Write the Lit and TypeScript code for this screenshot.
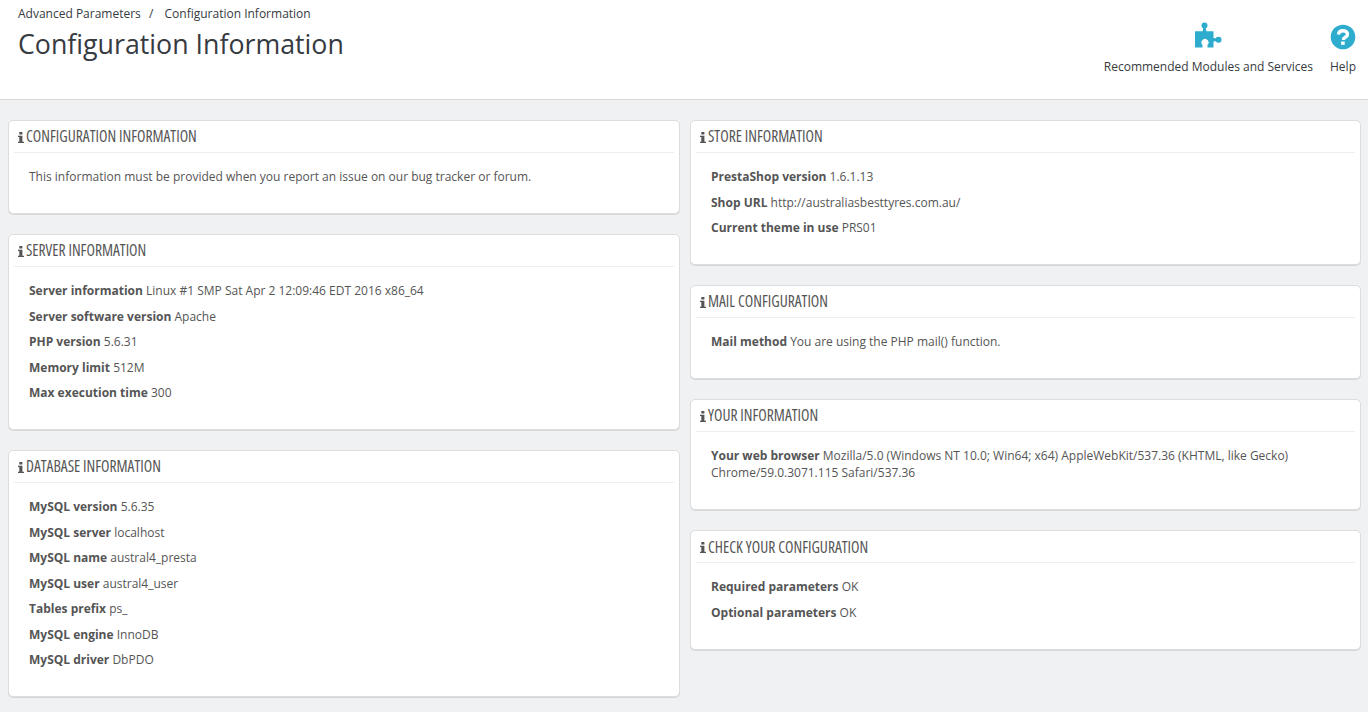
import { LitElement, html, css } from "lit";
import { customElement } from "lit/decorators.js";

type Row = [string, string];
type Card = { title: string; rows?: Row[]; text?: string };

const left: Card[] = [
  { title: "CONFIGURATION INFORMATION", text: "This information must be provided when you report an issue on our bug tracker or forum." },
  { title: "SERVER INFORMATION", rows: [
    ["Server information", "Linux #1 SMP Sat Apr 2 12:09:46 EDT 2016 x86_64"],
    ["Server software version", "Apache"],
    ["PHP version", "5.6.31"],
    ["Memory limit", "512M"],
    ["Max execution time", "300"],
  ] },
  { title: "DATABASE INFORMATION", rows: [
    ["MySQL version", "5.6.35"],
    ["MySQL server", "localhost"],
    ["MySQL name", "austral4_presta"],
    ["MySQL user", "austral4_user"],
    ["Tables prefix", "ps_"],
    ["MySQL engine", "InnoDB"],
    ["MySQL driver", "DbPDO"],
  ] },
];
const right: Card[] = [
  { title: "STORE INFORMATION", rows: [
    ["PrestaShop version", "1.6.1.13"],
    ["Shop URL", "http://australiasbesttyres.com.au/"],
    ["Current theme in use", "PRS01"],
  ] },
  { title: "MAIL CONFIGURATION", rows: [["Mail method", "You are using the PHP mail() function."]] },
  { title: "YOUR INFORMATION", rows: [["Your web browser", "Mozilla/5.0 (Windows NT 10.0; Win64; x64) AppleWebKit/537.36 (KHTML, like Gecko) Chrome/59.0.3071.115 Safari/537.36"]] },
  { title: "CHECK YOUR CONFIGURATION", rows: [["Required parameters", "OK"], ["Optional parameters", "OK"]] },
];

@customElement("app-root")
export class AppRoot extends LitElement {
  static styles = css`
    :host { display: block; min-height: 712px; background: #eff1f2; font-family: "Open Sans", sans-serif; font-size: 12px; line-height: 17.14px; color: #555; }
    * { box-sizing: border-box; }
    header { height: 100px; background: #fff; border-bottom: 1px solid #d9d9d9; padding: 5px 12px 0 18px; display: flex; justify-content: space-between; }
    .crumb { color: #363a41; height: 18px; line-height: 18px; white-space: pre; }
    .crumb .sep { margin: 0 8px 0 5px; }
    h1 { margin: 3px 0 0; font-weight: 400; font-size: 26.75px; line-height: 36px; color: #363a41; }
    .actions { display: flex; gap: 17px; padding-top: 17px; }
    .action { display: flex; flex-direction: column; align-items: center; color: #363a41; }
    .action svg { display: block; margin-bottom: 8px; }
    main { display: grid; grid-template-columns: 672px 671px; gap: 10px; padding: 20px 7px 0 8px; align-items: start; }
    .col { display: flex; flex-direction: column; gap: 20px; }
    .card { background: #fff; border: 1px solid #dcdddf; border-radius: 5px; padding: 0 5px 19.5px; box-shadow: 0 1px 0 rgba(0,0,0,.1); }
    .head { height: 32px; border-bottom: 1px solid #eee; display: flex; align-items: center; padding: 1px 0 0 4px; margin-bottom: 15px; color: #555; white-space: nowrap; }
    .head svg { width: 6px; height: 11px; margin-right: 2px; flex: none; }
    .title { font-size: 15.5px; display: inline-block; font-stretch: 75%; }
    .body { padding: 0 15px; }
    p { margin: 0 0 8.36px; }
    b { font-weight: 700; }
  `;

  private card(c: Card) {
    return html`<section class="card">
      <div class="head">
        <svg viewBox="0 0 6 11"><path fill="#555" d="M1.300 0h3.100v2.500H1.300zM0 3.800h4.400v5.900H6V11H0V9.700h1.300V5.100H0z"/></svg>
        <span class="title">${c.title}</span>
      </div>
      <div class="body">
        ${c.text ? html`<p>${c.text}</p>` : ""}
        ${(c.rows ?? []).map(([k, v]) => html`<p><b>${k}</b> ${v}</p>`)}
      </div>
    </section>`;
  }

  render() {
    return html`
      <header>
        <div>
          <div class="crumb">Advanced Parameters<span class="sep"> /</span> Configuration Information</div>
          <h1>Configuration Information</h1>
        </div>
        <div class="actions">
          <div class="action">
            <svg width="27" height="28" viewBox="0 0 27 28" fill="#2eacce"><circle cx="9.500" cy="3.400" r="3"/><circle cx="23.500" cy="17.700" r="3"/><path d="M0 9.300H7.600L8.500 5h2L11.400 9.300H18.500V16L22 16.500v2.400L18.500 19.400V25.500H12.500V23a3.500 3.500 0 1 0-5 0v2.500H0z"/></svg>
            Recommended Modules and Services
          </div>
          <div class="action">
            <svg width="26" height="28" viewBox="0 0 26 28"><circle cx="13" cy="15" r="12.300" fill="#2eacce"/><path fill="none" stroke="#fff" stroke-width="3.400" d="M8.500 12.500c.3-2.400 2.100-3.800 4.500-3.800 2.600 0 4.500 1.400 4.500 3.500 0 1.600-1 2.400-2.200 3.100-1.200.7-1.900 1.300-1.900 2.700"/><rect x="11.100" y="19.500" width="3.600" height="3.300" fill="#fff"/></svg>
            Help
          </div>
        </div>
      </header>
      <main>
        <div class="col">${left.map((c) => this.card(c))}</div>
        <div class="col">${right.map((c) => this.card(c))}</div>
      </main>
    `;
  }
}
